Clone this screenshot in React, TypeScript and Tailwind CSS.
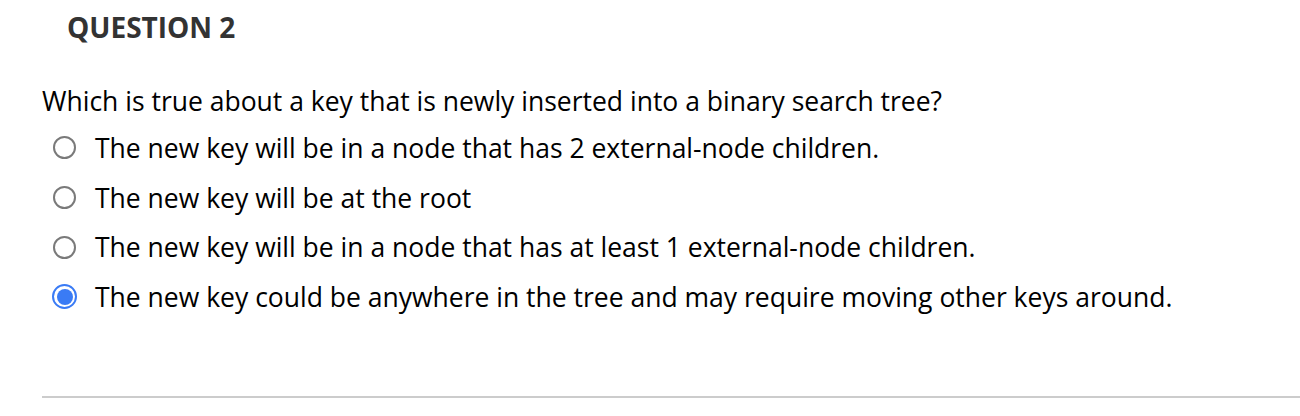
import { useState } from "react";

const options = [
  "The new key will be in a node that has 2 external-node children.",
  "The new key will be at the root",
  "The new key will be in a node that has at least 1 external-node children.",
  "The new key could be anywhere in the tree and may require moving other keys around.",
];

export default function App() {
  const [picked, setPicked] = useState(3);

  return (
    <div className="min-h-[416px] bg-white font-['Open_Sans',sans-serif] text-black">
      <div className="pl-[67px] h-[54px] flex items-center">
        <h2 className="text-[28px] leading-[34px] font-bold text-[#333]">QUESTION 2</h2>
      </div>
      <div className="pl-[42px] pt-[32px]">
        <p className="text-[26.5px] leading-[30px]">
          Which is true about a key that is newly inserted into a binary search tree?
        </p>
        <div className="mt-[7px] flex flex-col">
          {options.map((opt, i) => (
            <label key={i} className="flex items-center h-[49.7px] cursor-pointer" onClick={() => setPicked(i)}>
              <span className="w-[45px] flex justify-center">
                {picked === i ? (
                  <span className="w-[25px] h-[25px] rounded-full border-2 border-[#3a7bf5] flex items-center justify-center">
                    <span className="w-[16px] h-[16px] rounded-full bg-[#3a7bf5]" />
                  </span>
                ) : (
                  <span className="w-[23px] h-[23px] rounded-full border-2 border-[#7a7a7a]" />
                )}
              </span>
              <span className="ml-[8px] text-[26.5px] leading-[30px]">{opt}</span>
            </label>
          ))}
        </div>
      </div>
      <div className="mt-[74px] ml-[42px] h-[2px] bg-[#cccccc]" />
    </div>
  );
}
